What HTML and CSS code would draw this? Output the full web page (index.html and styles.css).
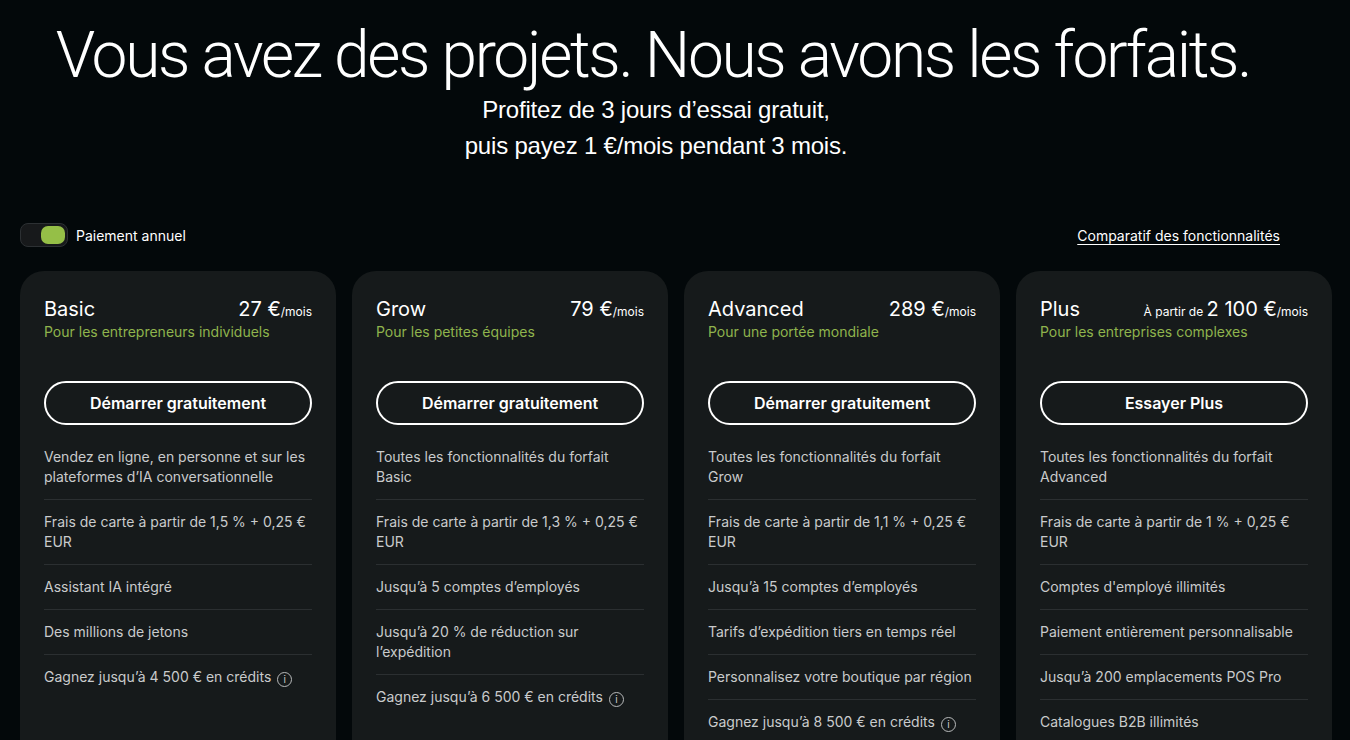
FILE: index.html
```html
<!DOCTYPE html>
<html lang="fr">
<head>
<meta charset="utf-8">
<title>Forfaits</title>
<link rel="stylesheet" href="styles.css">
</head>
<body>
<header class="hero">
  <h1 class="hero-title">Vous avez des projets. Nous avons les forfaits.</h1>
  <p class="hero-sub">Profitez de 3 jours d’essai gratuit,<br>puis payez 1&nbsp;€/mois pendant 3 mois.</p>
</header>

<div class="controls">
  <label class="toggle">
    <span class="switch"><span class="knob"></span></span>
    <span class="toggle-label">Paiement annuel</span>
  </label>
  <a class="compare" href="#">Comparatif des fonctionnalités</a>
</div>

<main class="plans">
  <section class="plan">
    <div class="plan-head">
      <h2 class="plan-name">Basic</h2>
      <div class="price"><span class="amount">27&nbsp;€</span><span class="per">/mois</span></div>
    </div>
    <p class="plan-tag">Pour les entrepreneurs individuels</p>
    <a class="cta" href="#">Démarrer gratuitement</a>
    <ul class="features">
      <li>Vendez en ligne, en personne et sur les plateformes d’IA conversationnelle</li>
      <li>Frais de carte à partir de 1,5&nbsp;% + 0,25&nbsp;€ EUR</li>
      <li>Assistant IA intégré</li>
      <li>Des millions de jetons</li>
      <li>Gagnez jusqu’à 4&nbsp;500&nbsp;€ en crédits <span class="info">i</span></li>
    </ul>
  </section>

  <section class="plan">
    <div class="plan-head">
      <h2 class="plan-name">Grow</h2>
      <div class="price"><span class="amount">79&nbsp;€</span><span class="per">/mois</span></div>
    </div>
    <p class="plan-tag">Pour les petites équipes</p>
    <a class="cta" href="#">Démarrer gratuitement</a>
    <ul class="features">
      <li>Toutes les fonctionnalités du forfait Basic</li>
      <li>Frais de carte à partir de 1,3&nbsp;% + 0,25&nbsp;€ EUR</li>
      <li>Jusqu’à 5 comptes d’employés</li>
      <li>Jusqu’à 20&nbsp;% de réduction sur l’expédition</li>
      <li>Gagnez jusqu’à 6&nbsp;500&nbsp;€ en crédits <span class="info">i</span></li>
    </ul>
  </section>

  <section class="plan">
    <div class="plan-head">
      <h2 class="plan-name">Advanced</h2>
      <div class="price"><span class="amount">289&nbsp;€</span><span class="per">/mois</span></div>
    </div>
    <p class="plan-tag">Pour une portée mondiale</p>
    <a class="cta" href="#">Démarrer gratuitement</a>
    <ul class="features">
      <li>Toutes les fonctionnalités du forfait Grow</li>
      <li>Frais de carte à partir de 1,1&nbsp;% + 0,25&nbsp;€ EUR</li>
      <li>Jusqu’à 15 comptes d’employés</li>
      <li>Tarifs d’expédition tiers en temps réel</li>
      <li>Personnalisez votre boutique par région</li>
      <li>Gagnez jusqu’à 8&nbsp;500&nbsp;€ en crédits <span class="info">i</span></li>
    </ul>
  </section>

  <section class="plan">
    <div class="plan-head">
      <h2 class="plan-name">Plus</h2>
      <div class="price"><span class="from">À partir de </span><span class="amount">2&nbsp;100&nbsp;€</span><span class="per">/mois</span></div>
    </div>
    <p class="plan-tag">Pour les entreprises complexes</p>
    <a class="cta" href="#">Essayer Plus</a>
    <ul class="features">
      <li>Toutes les fonctionnalités du forfait Advanced</li>
      <li>Frais de carte à partir de 1&nbsp;% + 0,25&nbsp;€ EUR</li>
      <li>Comptes d'employé illimités</li>
      <li>Paiement entièrement personnalisable</li>
      <li>Jusqu’à 200 emplacements POS Pro</li>
      <li>Catalogues B2B illimités</li>
    </ul>
  </section>
</main>
</body>
</html>
```

FILE: styles.css
```css
* {
  box-sizing: border-box;
}

html, body {
  margin: 0;
  padding: 0;
}

body {
  background: #03080a;
  color: #ffffff;
  font-family: Inter, "Noto Sans", sans-serif;
  overflow: hidden;
}

/* Heading block */
.hero {
  text-align: center;
  padding: 20px 44px 0 0;
}

.hero-title {
  margin: 0;
  font-family: Roboto, "Liberation Sans", sans-serif;
  font-weight: 300;
  font-size: 64px;
  line-height: 72px;
  letter-spacing: -2.3px;
  white-space: nowrap;
}

.hero-sub {
  margin: 0;
  padding-left: 6px;
  font-family: "Liberation Sans", Roboto, sans-serif;
  font-size: 24px;
  line-height: 36px;
  letter-spacing: -0.2px;
}

/* Billing toggle and comparison link */
.controls {
  display: flex;
  align-items: center;
  justify-content: space-between;
  padding: 0 70px 0 20px;
  margin-top: 59px;
  height: 24px;
}

.toggle {
  display: flex;
  align-items: center;
  gap: 8px;
  font-size: 14px;
}

.switch {
  display: flex;
  justify-content: flex-end;
  align-items: center;
  width: 48px;
  height: 24px;
  padding: 2px;
  border-radius: 8px;
  background: #17191b;
  border: 1px solid #2c3033;
}

.knob {
  width: 24px;
  height: 18px;
  border-radius: 7px;
  background: #95bf47;
}

.compare {
  color: #ffffff;
  font-size: 14px;
  text-decoration: underline;
  text-underline-offset: 3px;
}

/* Plan cards */
.plans {
  display: grid;
  grid-template-columns: repeat(4, 1fr);
  gap: 16px;
  padding: 24px 18px 0 20px;
}

.plan {
  background: #161a1b;
  border-radius: 24px;
  padding: 25px 24px 24px;
  min-height: 600px;
}

.plan-head {
  display: flex;
  justify-content: space-between;
  align-items: baseline;
}

.plan-name {
  margin: 0;
  font-size: 20px;
  font-weight: 400;
  line-height: 26px;
}

.price {
  white-space: nowrap;
}

.amount {
  font-size: 20px;
}

.per,
.from {
  font-size: 12px;
}

.plan-tag {
  margin: 0;
  color: #8fb44d;
  font-size: 14px;
  line-height: 20px;
}

.cta {
  display: flex;
  align-items: center;
  justify-content: center;
  height: 44px;
  margin-top: 39px;
  border: 2px solid #ffffff;
  border-radius: 999px;
  color: #ffffff;
  text-decoration: none;
  font-size: 16px;
  font-weight: 600;
}

.features {
  list-style: none;
  margin: 10px 0 0;
  padding: 0;
}

.features li {
  padding: 12px 0;
  border-bottom: 1px solid #2b2f31;
  color: #c9cbcc;
  font-size: 14px;
  line-height: 20px;
}

.features li:last-child {
  border-bottom: none;
}

.info {
  display: inline-flex;
  align-items: center;
  justify-content: center;
  width: 15px;
  height: 15px;
  margin-left: 2px;
  border: 1px solid #b8babb;
  border-radius: 50%;
  font-size: 10px;
  line-height: 1;
  vertical-align: -1px;
  color: #c9cbcc;
}
```
